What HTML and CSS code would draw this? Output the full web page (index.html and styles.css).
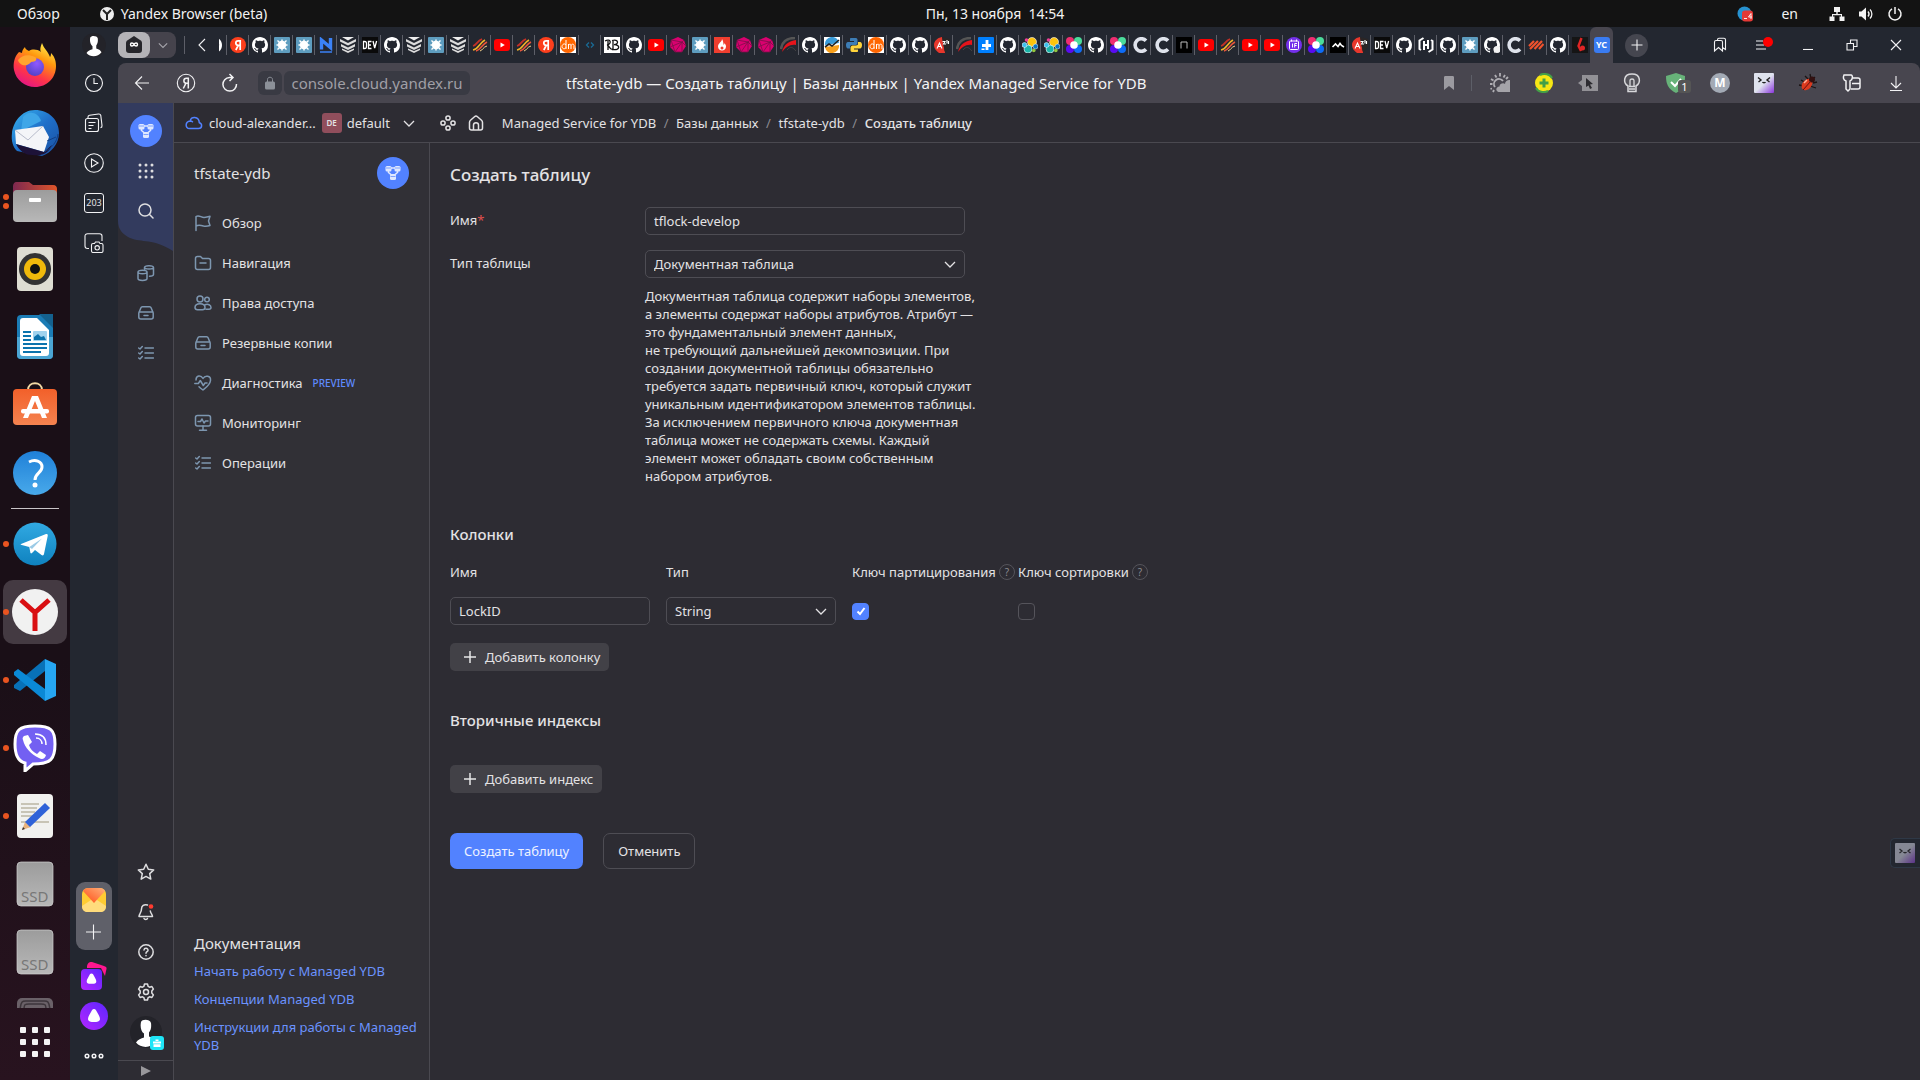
FILE: index.html
```html
<!DOCTYPE html>
<html lang="ru">
<head>
<meta charset="utf-8">
<meta name="viewport" content="width=device-width, initial-scale=1">
<title>tfstate-ydb — Создать таблицу</title>
<link rel="stylesheet" href="styles.css">
</head>
<body>
<svg class="sprite" aria-hidden="true">
  <defs>
    <linearGradient id="g-fox" x1="0.8" y1="0" x2="0.3" y2="1"><stop offset="0" stop-color="#fff44f"/><stop offset="0.35" stop-color="#ff980e"/><stop offset="0.7" stop-color="#ff3647"/><stop offset="1" stop-color="#e31587"/></linearGradient>
    <radialGradient id="g-globe" cx="0.6" cy="0.3" r="0.8"><stop offset="0" stop-color="#9059ff"/><stop offset="1" stop-color="#4a3fc0"/></radialGradient>
    <linearGradient id="g-bird" x1="0" y1="0" x2="1" y2="1"><stop offset="0" stop-color="#38b4f0"/><stop offset="0.5" stop-color="#1f6fc9"/><stop offset="1" stop-color="#1a4fa0"/></linearGradient>
    <linearGradient id="g-grey" x1="0" y1="0" x2="0" y2="1"><stop offset="0" stop-color="#9c9c9c"/><stop offset="1" stop-color="#b8b8b8"/></linearGradient>
    <linearGradient id="g-folder" x1="0" y1="0" x2="1" y2="0"><stop offset="0" stop-color="#7d2850"/><stop offset="1" stop-color="#e0552a"/></linearGradient>
    <linearGradient id="g-orange" x1="0" y1="0" x2="0" y2="1"><stop offset="0" stop-color="#f2602a"/><stop offset="1" stop-color="#f58350"/></linearGradient>
    <linearGradient id="g-help" x1="0" y1="0" x2="0" y2="1"><stop offset="0" stop-color="#1f80d8"/><stop offset="1" stop-color="#48a9ea"/></linearGradient>
    <linearGradient id="g-tg" x1="0" y1="0" x2="0" y2="1"><stop offset="0" stop-color="#31a9e2"/><stop offset="1" stop-color="#0f82bf"/></linearGradient>
    <linearGradient id="g-alice" x1="1" y1="0" x2="0" y2="1"><stop offset="0" stop-color="#5c26ff"/><stop offset="1" stop-color="#b426ff"/></linearGradient>
    <linearGradient id="g-mail" x1="0" y1="1" x2="1" y2="0"><stop offset="0" stop-color="#ff4b14"/><stop offset="1" stop-color="#ffb27a"/></linearGradient>
    <linearGradient id="g-face" x1="0" y1="0" x2="1" y2="1"><stop offset="0.5" stop-color="#dfe3ee"/><stop offset="1" stop-color="#8a35dd"/></linearGradient>
    <linearGradient id="g-facedim" x1="0" y1="0" x2="1" y2="1"><stop offset="0.5" stop-color="#858894"/><stop offset="1" stop-color="#5b3288"/></linearGradient>
  </defs>
  <symbol id="t-ya" viewBox="0 0 16 16"><circle cx="8" cy="8" r="8" fill="#fc3f1d"/><path d="M10.200 3v10M10 3.800H8.200C5 3.800 5 8.300 8.200 8.300H10M8.300 8.300L5.800 13" fill="none" stroke="#fff" stroke-width="1.700"/></symbol>
  <symbol id="t-gh" viewBox="0 0 16 16"><path fill="#fff" d="M8 0C3.58 0 0 3.58 0 8c0 3.54 2.29 6.53 5.47 7.59.4.07.55-.17.55-.38 0-.19-.01-.82-.01-1.49-2.01.37-2.53-.49-2.69-.94-.09-.23-.48-.94-.82-1.13-.28-.15-.68-.52-.01-.53.63-.01 1.08.58 1.23.82.72 1.21 1.87.87 2.33.66.07-.52.28-.87.51-1.07-1.78-.2-3.64-.89-3.64-3.95 0-.87.31-1.59.82-2.15-.08-.2-.36-1.02.08-2.12 0 0 .67-.21 2.2.82.64-.18 1.32-.27 2-.27s1.36.09 2 .27c1.53-1.04 2.2-.82 2.2-.82.44 1.1.16 1.92.08 2.12.51.56.82 1.27.82 2.15 0 3.07-1.87 3.75-3.65 3.95.29.25.54.73.54 1.48 0 1.07-.01 1.93-.01 2.2 0 .21.15.46.55.38A8.01 8.01 0 0016 8c0-4.42-3.58-8-8-8z"/></symbol>
  <symbol id="t-sun" viewBox="0 0 16 16"><rect width="16" height="16" rx="1" fill="#5e9dbf"/><path d="M8 2.500v11M2.500 8h11M3.500 3.500l9 9M12.500 3.500l-9 9" stroke="#fff" stroke-width="1.400"/><circle cx="8" cy="8" r="4.200" fill="#fff"/></symbol>
  <symbol id="t-n" viewBox="0 0 16 16"><path d="M3.500 12.500V3l9 7.500V1" fill="none" stroke="#3b82f6" stroke-width="3.400"/><path d="M2 15h12" stroke="#3b82f6" stroke-width="1.500"/></symbol>
  <symbol id="t-stack" viewBox="0 0 16 16"><path d="M0 2l8 4 8-4v2.500l-8 4-8-4zM1 7l7 3.500L15 7v2.500L8 13 1 9.500zM2 11.500L8 14l6-2.500v1.500l-6 3-6-3z" fill="#dcdcdc"/><path d="M2 0h12L8 3.500z" fill="#eee"/></symbol>
  <symbol id="t-dev" viewBox="0 0 16 16"><rect width="16" height="16" fill="#0a0a0a"/><path d="M1.500 4.500v7h1c2 0 2-1 2-3.500s0-3.500-2-3.500zM9.500 4.500h-3v7h3M6.500 8h2.500M11 4l1.700 7L14.600 4" fill="none" stroke="#fff" stroke-width="1.300"/></symbol>
  <symbol id="t-stripe" viewBox="0 0 16 16"><path d="M1 9c4-1 4-5 9-7" stroke="#c33027" stroke-width="1.800" fill="none"/><path d="M1 13c6-1 6-7 12-10" stroke="#f0b429" stroke-width="1.600" fill="none"/><path d="M4 14c5-1 5-6 11-9" stroke="#e8553c" stroke-width="1.600" fill="none"/><path d="M8 14c3-1 3-4 7-5" stroke="#f6d28b" fill="none"/></symbol>
  <symbol id="t-yt" viewBox="0 0 16 16"><rect y="2" width="16" height="12" rx="3" fill="#f00"/><path d="M6.500 5.500v5L10.800 8z" fill="#fff"/></symbol>
  <symbol id="t-dm" viewBox="0 0 16 16"><rect width="16" height="16" fill="#fff"/><circle cx="8" cy="8" r="8" fill="#f60"/><path d="M6 3v9M6 8C5 6 2 7 2 9.500s3 3 4 1M8.500 12V7M8.500 8.500c1-2 2.500-1.500 2.500 0V12M11 8.500c1-2 3-1.500 3 0V12" stroke="#fff" fill="none"/></symbol>
  <symbol id="t-code" viewBox="0 0 16 16"><path d="M7 5.500L4.500 8 7 10.500M9 5.500l2.500 2.500L9 10.500" stroke="#1a6a94" stroke-width="1.300" fill="none"/></symbol>
  <symbol id="t-rb" viewBox="0 0 16 16"><rect width="16" height="16" fill="#fff"/><path d="M1 4c6-3 7 3 2 4 2 0 3 5 5 4M4 4v9M9 3v9.500M8 3.500c7-2 7 4 2 4.200 7 0 6 6-2 4.800" stroke="#111" stroke-width="1.300" fill="none"/></symbol>
  <symbol id="t-gem" viewBox="0 0 16 16"><path d="M8 0l6 3 2 6-4 6H5L0 10l1-7z" fill="#d9016f"/><path d="M1 3l11 2 4 4M12 5L5 15M1 3l4 12M5 15h7V5M0 10l12-5 2-2" stroke="#7a1048" stroke-width=".8" fill="none"/></symbol>
  <symbol id="t-burn" viewBox="0 0 16 16"><rect width="16" height="16" fill="#f03e2f"/><path d="M8 2c0 3-4 4-4 7.500C4 12 6 13.500 8 13.500s4-1.500 4-4C12 7.500 11 7 10.500 6c0 1-.5 1.500-1 2C9.500 6 9 3.500 8 2z" fill="#fff"/><circle cx="8" cy="11" r="1.500" fill="#f03e2f"/></symbol>
  <symbol id="t-arc" viewBox="0 0 16 16"><path d="M1 12C2 4 8 1 15 1" stroke="#555" stroke-width="2.500" fill="none"/><path d="M2 15C4 7 9 4 16 3v5c-6-1-10 2-14 7z" fill="#e5141b"/><path d="M7 13c3-4 6-3 9 1" stroke="#444" fill="none"/></symbol>
  <symbol id="t-chart" viewBox="0 0 16 16"><rect width="16" height="16" fill="#fff"/><path d="M1 8a7 7 0 0114-2z" fill="#3a9bd8"/><path d="M15 8A7 7 0 011 10z" fill="#f8a01c"/><path d="M1 10l4-3 3 2 7-6" stroke="#222" stroke-width="1.600" fill="none"/></symbol>
  <symbol id="t-py" viewBox="0 0 16 16"><path d="M5 1h5c1 0 1.500 1 1.500 2v3c0 1-1 2-2 2H6C4.500 8 4 9 4 10v1.500H2C.5 11.500 0 9.500 0 8s.5-3 2-3h6V4H4V2.500C4 1.500 4 1 5 1z" fill="#3d7db5"/><path d="M11 15H6c-1 0-1.500-1-1.500-2v-2.500c0-1 1-2 2-2H10c1.500 0 2-1 2-2V5h2c1.500 0 2 1.500 2 3s-.5 3.500-2 3.500H8v1h4V13c0 1.500 0 2-1 2z" fill="#ffd43b"/></symbol>
  <symbol id="t-a" viewBox="0 0 16 16"><path d="M8 0C3 1 0 4 0 8c0 3 2 6 5 8h6z" fill="#e8372c"/><path d="M8 0l8 2v8l-5 6z" fill="#2a2626"/><path d="M7 6l4 10H5z" fill="#e8372c"/><path d="M3 11.500L5.500 6 8 11.500M4 9.500h3.500M8.500 4.500H11L9.500 7H12M13 3v3.500M14.500 4v3" stroke="#fff" stroke-width="1.100" fill="none"/></symbol>
  <symbol id="t-plus" viewBox="0 0 16 16"><rect width="16" height="16" rx="1" fill="#0080ff"/><path d="M9 3v10M4 8.500h9" stroke="#fff" stroke-width="2.800"/><path d="M3.500 11.500h3V13h-3z" fill="#fff"/></symbol>
  <symbol id="t-el" viewBox="0 0 16 16"><circle cx="10" cy="5" r="4.500" fill="#fdc40c" stroke="#fff" stroke-width=".6"/><circle cx="6" cy="12" r="4" fill="#1bb5a9" stroke="#fff" stroke-width=".6"/><circle cx="2.500" cy="8" r="2.500" fill="#3cc1ee" stroke="#fff" stroke-width=".5"/><circle cx="13.500" cy="9.500" r="2.500" fill="#0a76c2" stroke="#fff" stroke-width=".5"/><circle cx="4.500" cy="3" r="1.800" fill="#ee3f97"/><circle cx="11.800" cy="13.500" r="1.800" fill="#93c83e"/></symbol>
  <symbol id="t-four" viewBox="0 0 16 16"><circle cx="4" cy="4" r="4" fill="#ef2d71"/><circle cx="12" cy="4" r="4" fill="#4bdc9b"/><circle cx="4" cy="12" r="4" fill="#5a0cf2"/><circle cx="12" cy="12" r="4" fill="#0e6cf7"/><circle cx="8" cy="8" r="3.800" fill="#fff"/></symbol>
  <symbol id="t-c" viewBox="0 0 16 16"><path d="M14 3.700A6.300 6.300 0 1014 12.300" fill="none" stroke="#dfe3ec" stroke-width="3.600"/></symbol>
  <symbol id="t-arch" viewBox="0 0 16 16"><rect width="16" height="16" fill="#000"/><path d="M5 11.500V5h6v6.500" fill="none" stroke="#bbb"/></symbol>
  <symbol id="t-if" viewBox="0 0 16 16"><circle cx="8" cy="8" r="8" fill="#7430ea"/><rect x="3.500" y="4" width="9" height="8.500" rx="1" fill="none" stroke="#fff"/><path d="M5.500 2.500v2M10.500 2.500v2M6.500 6.500v4M8.700 10.500v-4H11M8.700 8.500h2" stroke="#fff" fill="none"/></symbol>
  <symbol id="t-mt" viewBox="0 0 16 16"><rect width="16" height="16" fill="#000"/><path d="M2.500 10l3-3 2.500 2.500 2-3 1.500 2 2.500 1.500" fill="none" stroke="#fff" stroke-width="1.600"/></symbol>
  <symbol id="t-hc" viewBox="0 0 16 16"><path d="M5.500 1L1.500 3.500v8.500l1.500 1M6 4v9M6 8h4M10 3v9M10.500 15l4-2.500V4L13 3" stroke="#fff" stroke-width="2" fill="none"/></symbol>
  <symbol id="t-ghdot" viewBox="0 0 16 16"><use href="#t-gh"/><circle cx="13" cy="12.500" r="3.500" fill="#f2f2f2"/></symbol>
  <symbol id="t-strp2" viewBox="0 0 16 16"><path d="M1 9l5-5M2 12L10 4M6.500 12L14 4M11 12l4.500-5" stroke="#f0522d" stroke-width="2.200"/></symbol>
  <symbol id="t-six" viewBox="0 0 16 16"><rect width="16" height="16" fill="#151515"/><path d="M9.500 1L6.500 9l2.500 5" stroke="#e02525" stroke-width="2.400" fill="none"/><circle cx="10.500" cy="11" r="2.500" fill="#e02525"/></symbol>

  <symbol id="user" viewBox="0 0 32 32"><circle cx="16" cy="16" r="16" fill="#232329"/><path d="M11 6c1-3 9-3 10 1 .5 4 0 7-2 9.500v4c4 1 6 3 7 5-5 7-15 7-20 1 2-3 5-4 8-5v-4c-3-2-4-7-3-11.500z" fill="#fff"/></symbol>
  <symbol id="ydb" viewBox="0 0 32 32"><circle cx="16" cy="16" r="16" fill="#5282ff"/><g fill="#dfe8ff"><rect x="8.500" y="9" width="6" height="5.500" rx="1.500"/><rect x="17.500" y="9" width="6" height="5.500" rx="1.500"/><rect x="13" y="17" width="6" height="6" rx="1.500"/></g><path d="M14 11h4M11.500 14v1.500l3 2.500M20.500 14v1.500l-3 2.500" stroke="#dfe8ff" stroke-width="1.600" fill="none"/><path d="M9 11h5M18 11h5M13.500 19.500h5" stroke="#5282ff" stroke-width=".7"/></symbol>
  <symbol id="alice" viewBox="0 0 20 20"><path d="M10 3c1.500 0 2 1 3 3 1.300 2.500 3 5 3 7 0 2.500-3 3-6 3s-6-.5-6-3c0-2 1.700-4.500 3-7 1-2 1.500-3 3-3z" fill="#fff"/></symbol>
  <symbol id="chev" viewBox="0 0 12 12"><path d="M1 4L6 9 11 4" fill="none" stroke="currentColor" stroke-width="1.300"/></symbol>
  <symbol id="drawer" viewBox="0 0 16 16"><path d="M.8 8l2-5c.3-.8.8-1.200 1.600-1.200h7.200c.8 0 1.300.4 1.600 1.200l2 5v4c0 1.200-.8 2-2 2H2.800c-1.200 0-2-.8-2-2zM1 7h14M6 10.500h4" class="ln"/></symbol>
  <symbol id="checks" viewBox="0 0 16 16"><path d="M7 3h8.500M7 8h8.500M7 13h8.500M.7 3l1.300 1L4.300 1.500M.7 8L2 9l2.300-2.500M.7 13L2 14l2.300-2.500" class="ln"/></symbol>
  <symbol id="ssd" viewBox="0 0 48 48"><rect x="6" y="2" width="36" height="44" rx="4" fill="url(#g-grey)" stroke="#d0d0d0" stroke-width=".7"/></symbol>
</svg>

<header class="topbar">
  <div class="topbar-left">
    <button class="plain">Обзор</button>
    <button class="plain app-name"><svg width="14" height="14" viewBox="0 0 14 14"><circle cx="7" cy="7" r="7" fill="#eee"/><path d="M3 3l4 4 4-4M7 7v6" stroke="#222" stroke-width="2" fill="none"/></svg>Yandex Browser (beta)</button>
  </div>
  <button class="plain clock">Пн, 13 ноября&nbsp; 14:54</button>
  <div class="topbar-right">
    <svg class="tray-tg" width="16" height="16" viewBox="0 0 16 16"><circle cx="7.500" cy="7.500" r="7" fill="#2792d0"/><rect x="5" y="4.500" width="11" height="11" rx="3" fill="#e53935"/><path d="M7 12.500h3M14 13V7.500L11.500 11H15" stroke="#fff" fill="none" stroke-width=".9"/></svg>
    <span class="lang">en</span>
    <svg width="16" height="16" viewBox="0 0 16 16" fill="#f2f2f2"><path d="M5 1h6v5H8.700v2H13v2.500h2.500V15h-5v-4.500H12V9.200H4v1.300h1.500V15h-5v-4.500H3V8h4.300V6H5z"/></svg>
    <svg width="16" height="16" viewBox="0 0 16 16"><path d="M1 5.500h2.500L8 1.500v13l-4.500-4H1z" fill="#f2f2f2"/><path d="M10 5.500c1.300 1.500 1.300 3.500 0 5M12 3.500c2.500 2.500 2.500 6.500 0 9" fill="none" stroke="#f2f2f2" stroke-width="1.300"/></svg>
    <svg width="16" height="16" viewBox="0 0 16 16"><path d="M5 2.800a6 6 0 106 0M8 1v7" fill="none" stroke="#f2f2f2" stroke-width="1.500"/></svg>
  </div>
</header>

<div class="desktop">
  <nav class="dock" aria-label="Dock">
    <button class="dock-item" aria-label="Firefox"><svg viewBox="0 0 48 48"><path d="M31 2c-2 5-2 7-1 9-4-3-9-3-12-1-3-1-4-3-4-4-2 2-3 4-3 6l-3-1c-5 5-6 12-5 18 2 10 11 17 21 17 12 0 21-9 21-21 0-6-2-10-5-13 0 3-1 4-1 4-2-6-6-8-8-14z" fill="url(#g-fox)"/><circle cx="24" cy="26" r="9" fill="url(#g-globe)"/><path d="M7 19c4-5 10-6 17-3 3 2 1 5-4 5-1 2-4 3-4 3-4 1-8-1-9-5z" fill="#ffa52e"/></svg></button>
    <button class="dock-item" aria-label="Thunderbird"><svg viewBox="0 0 48 48"><path d="M24 1c14 0 24 10 24 23 0 11-8 20-17 23L6 42C2 38 0 32 1 24 2 14 10 1 24 1z" fill="url(#g-bird)"/><path d="M12 8C18 0 28 4 30 12L10 22z" fill="#3ea6e8"/><path d="M4 21l28-4 6 11-5 15-28-8z" fill="#f4f5f8"/><path d="M4 21l13 10 15-14" stroke="#b8bccb" fill="none"/><path d="M5 35l28 8 8-7c-4 10-12 11-20 10-8 0-13-5-16-11z" fill="#1d1238"/><path d="M33 43c8-4 13-10 14-18M36 32l9-4" stroke="#123f85" fill="none"/></svg></button>
    <button class="dock-item" aria-label="Файлы"><i class="dot-a"></i><svg viewBox="0 0 48 48"><path d="M2 10c0-3 1-5 4-5h12l4 3h20c3 0 4 2 4 4v12H2z" fill="url(#g-folder)"/><rect x="2" y="13" width="44" height="32" rx="4" fill="url(#g-grey)"/><rect x="18" y="21" width="12" height="4" rx="1" fill="#fff"/></svg></button>
    <button class="dock-item" aria-label="Rhythmbox"><svg viewBox="0 0 48 48"><rect x="6" y="2" width="36" height="44" rx="4" fill="#deddd2"/><circle cx="24" cy="24" r="16" fill="#333"/><circle cx="24" cy="24" r="11" fill="#f0b90b"/><circle cx="24" cy="24" r="5" fill="#111"/></svg></button>
    <button class="dock-item" aria-label="Writer"><svg viewBox="0 0 48 48"><rect x="6" y="2" width="36" height="44" rx="4" fill="#1b7cb5"/><path d="M6 24h36v18a4 4 0 01-4 4H10a4 4 0 01-4-4z" fill="#4ba5d3"/><path d="M9 8c0-2 1-3 3-3h14l12 12v23c0 2-1 3-3 3H12c-2 0-3-1-3-3z" fill="#fff"/><path d="M28 1h14v14z" fill="#14618e"/><path d="M12 19h8M12 23h8M12 27h8M12 31h24M12 35h24M12 39h18" stroke="#0c73ad" stroke-width="2"/><rect x="22" y="18" width="14" height="10" rx="1" fill="#9fd2ee"/><path d="M23 27v-3l4-3 3 3 3-1 2 4z" fill="#0c73ad"/></svg></button>
    <button class="dock-item" aria-label="Ubuntu Software"><svg viewBox="0 0 48 48"><path d="M17 9c0-9 14-9 14 0" stroke="#f3d9a5" stroke-width="2" fill="none"/><rect x="2" y="8" width="44" height="36" rx="4" fill="url(#g-orange)"/><path d="M12 37l9-22h6l9 22h-5l-7-17-7 17z" fill="#fff"/><rect x="10" y="28" width="28" height="4.500" rx="2" fill="#fff"/></svg></button>
    <button class="dock-item" aria-label="Справка"><svg viewBox="0 0 48 48"><circle cx="24" cy="24" r="22" fill="url(#g-help)"/><path d="M18 13c6-3 13-1 13 5 0 6-7 6-7 13" stroke="#fff" stroke-width="3" fill="none"/><circle cx="24" cy="36" r="2.500" fill="#fff"/></svg></button>
    <hr>
    <button class="dock-item" aria-label="Telegram"><i class="dot-b"></i><svg viewBox="0 0 48 48"><circle cx="24" cy="24" r="21.500" fill="url(#g-tg)"/><path d="M10 24l25-10c1.500-.4 2 .3 1.700 2L33 34c-.3 1.500-1.300 1.700-2.500 1l-6.500-5-3 3c-1 1-1.600.3-1.700-.7l-1-5.300-7.500-2c-1.300-.3-1.300-1-.8-1z" fill="#fff"/><path d="M18.300 27L31 18.500 21 29z" fill="#9ccbe6"/></svg></button>
    <button class="dock-item active" aria-label="Yandex Browser"><i class="dot-b"></i><svg viewBox="0 0 48 48"><circle cx="24" cy="24" r="23" fill="#f1f1f1"/><path d="M10 12l14 12.500L38 12M24 24v19" stroke="#d90f12" stroke-width="5" fill="none"/></svg></button>
    <button class="dock-item" aria-label="Visual Studio Code"><i class="dot-b"></i><svg viewBox="0 0 48 48"><path d="M34 3v12L9 35l-6-3v-3z" fill="#0871b8"/><path d="M34 45V33L7 13l-4 3v3z" fill="#0b89d6"/><path d="M34 3l11 5v32l-11 5z" fill="#26a6f2"/></svg></button>
    <button class="dock-item" aria-label="Viber"><i class="dot-b"></i><svg viewBox="0 0 48 48"><path d="M24 2C8 2 4 6 4 20c0 10 2 17 10 19v8l8-7c18 0 22-5 22-20C44 6 40 2 24 2z" fill="#7360f2" stroke="#fff" stroke-width="3"/><path d="M13 12l4-1 4 7-3 3c1 4 4 7 8 9l3-3 6 4c-1 4-4 5-7 3-8-4-14-10-16-18-1-2 0-3 1-4z" fill="#fff"/><path d="M24 10c8 0 11 4 11 11M25 14c4 0 6 3 6 6" stroke="#fff" stroke-width="1.500" fill="none"/></svg></button>
    <button class="dock-item" aria-label="Редактор"><i class="dot-b"></i><svg viewBox="0 0 48 48"><rect x="6" y="2" width="36" height="44" rx="4" fill="#f1f1ef"/><path d="M10 12h18M10 16h16M10 20h14M10 24h12M10 30h28" stroke="#c8c4b6" stroke-width="2"/><path d="M11 38l3-8 6 5z" fill="#e8b27c"/><path d="M14 30L34 11l5 5-20 19z" fill="#2f62d8"/><path d="M11 38l1-3 2 2z" fill="#333"/></svg></button>
    <button class="dock-item ssd"><svg viewBox="0 0 48 48"><use href="#ssd"/></svg><span>SSD</span></button>
    <button class="dock-item ssd"><svg viewBox="0 0 48 48"><use href="#ssd"/></svg><span>SSD</span></button>
    <div class="dock-cut"><svg width="36" height="30" viewBox="0 0 36 30"><rect width="36" height="30" rx="5" fill="#6a6168"/><path d="M3 12c1-10 3-9 7-9h16c4 0 6-1 7 9M7 12c0-6 1-6 5-6h12c4 0 5 0 5 6" fill="none" stroke="#3d353b" stroke-width="1.500"/></svg></div>
    <button class="dock-item" aria-label="Приложения"><svg class="apps" viewBox="0 0 30 30" fill="#f4f4f4"><rect width="6" height="6" rx="1"/><rect x="12" width="6" height="6" rx="1"/><rect x="24" width="6" height="6" rx="1"/><rect y="12" width="6" height="6" rx="1"/><rect x="12" y="12" width="6" height="6" rx="1"/><rect x="24" y="12" width="6" height="6" rx="1"/><rect y="24" width="6" height="6" rx="1"/><rect x="12" y="24" width="6" height="6" rx="1"/><rect x="24" y="24" width="6" height="6" rx="1"/></svg></button>
  </nav>

  <aside class="side">
    <button class="side-item first" aria-label="Профиль"><svg width="24" height="24"><use href="#user"/></svg></button>
    <button class="side-item" aria-label="История"><svg width="20" height="20" viewBox="0 0 20 20" class="thin"><circle cx="10" cy="10" r="8.500"/><path d="M10 5v5.500h4"/></svg></button>
    <button class="side-item" aria-label="Коллекции"><svg width="20" height="20" viewBox="0 0 20 20" class="thin"><rect x="1.500" y="5.500" width="13" height="13" rx="2"/><path d="M4 5.500V4c0-1 .5-1.500 1.500-1.700l9-1.300c1.500-.2 2 .3 2.300 1.500l1.200 10c.2 1.300-.3 2-1.500 2.300M4.500 9.500h7M4.500 12.500h5M4.500 15.500h3"/></svg></button>
    <button class="side-item" aria-label="Видео"><svg width="20" height="20" viewBox="0 0 20 20" class="thin"><circle cx="10" cy="10" r="9.300"/><path d="M7.500 6l6.500 4-6.500 4z"/></svg></button>
    <button class="side-item"><span class="counter">203</span></button>
    <button class="side-item" aria-label="Скриншот"><svg width="20" height="20" viewBox="0 0 20 20" class="thin"><path d="M5 15.500H3.500c-1.500 0-2.500-1-2.500-2.500V3C1 1.500 2 .7 3.500.7h12C17 .7 18 1.500 18 3v5M7.500 12c0-1 .5-1.500 1.500-1.500h1.500l1-1.500h3.500l1 1.500h1.500c1 0 1.500.5 1.500 1.500v6c0 1-.5 1.500-1.500 1.500H9c-1 0-1.500-.5-1.500-1.500z"/><circle cx="13.200" cy="14.800" r="2.200"/></svg></button>
    <div class="side-group">
      <button class="plain" aria-label="Почта"><svg width="24" height="24" viewBox="0 0 24 24"><rect width="24" height="24" rx="6" fill="#ffcc33"/><path d="M0 18l12-8 12 8c0 4-2 6-6 6H6c-4 0-6-2-6-6z" fill="#ffdc7c"/><path d="M1 3c1-2 3-3 5-3h12c2 0 4 1 5 3L12 15z" fill="url(#g-mail)"/></svg></button>
      <button class="plain" aria-label="Добавить"><svg width="16" height="16" viewBox="0 0 16 16" class="thin"><path d="M7.500 .5v15M0 8h15"/></svg></button>
    </div>
    <button class="side-item" aria-label="Алиса"><svg width="26" height="28" viewBox="0 0 26 28"><path d="M6 4C7 0 9 0 11 0l12 4c3 1 3 2 2 5l-1 5-4-8H6z" fill="#ff1790"/><rect y="7" width="21" height="21" rx="4" fill="url(#g-alice)"/><use href="#alice" x="2.500" y="9" width="16" height="16"/></svg></button>
    <button class="side-item" aria-label="Алиса"><svg width="28" height="28" viewBox="0 0 28 28"><circle cx="14" cy="14" r="14" fill="url(#g-alice)"/><use href="#alice" x="4" y="4" width="20" height="20"/></svg></button>
    <button class="side-item" aria-label="Ещё"><svg width="20" height="6" viewBox="0 0 20 6" class="thin bolder"><circle cx="3" cy="3" r="1.800"/><circle cx="10" cy="3" r="1.800"/><circle cx="17" cy="3" r="1.800"/></svg></button>
  </aside>

  <div class="browser">
    <div class="tabs">
      <div class="switcher"><button class="plain mode" aria-label="Режим"><svg width="18" height="18" viewBox="0 0 18 18"><path d="M3 4l6-4 6 4c2 1 2 2 2 4v6c0 2-1 3-3 3H4c-2 0-3-1-3-3V8c0-2 0-3 2-4z" fill="#26262b"/><path d="M9 8.500c-1-2-3.500-2-3.500 0s2.500 2 3.500 0 3.500-2 3.500 0-2.500 2-3.500 0z" fill="none" stroke="#fff" stroke-width="1.400"/></svg></button><button class="plain mode-more" aria-label="Ещё"><svg width="10" height="10"><use href="#chev"/></svg></button></div>
      <span class="bar"></span>
      <button class="plain prev" aria-label="Назад"><svg width="10" height="14" viewBox="0 0 10 14" class="thin"><path d="M8 1L2 7l6 6"/></svg></button>
      <span class="cut"><svg width="16" height="16"><use href="#t-gh"/></svg></span>
      <button class="tab"><svg><use href="#t-ya"/></svg></button><button class="tab"><svg><use href="#t-gh"/></svg></button><button class="tab"><svg><use href="#t-sun"/></svg></button><button class="tab"><svg><use href="#t-sun"/></svg></button><button class="tab"><svg><use href="#t-n"/></svg></button><button class="tab"><svg><use href="#t-stack"/></svg></button><button class="tab"><svg><use href="#t-dev"/></svg></button><button class="tab"><svg><use href="#t-gh"/></svg></button><button class="tab"><svg><use href="#t-stack"/></svg></button><button class="tab"><svg><use href="#t-sun"/></svg></button><button class="tab"><svg><use href="#t-stack"/></svg></button><button class="tab"><svg><use href="#t-stripe"/></svg></button><button class="tab"><svg><use href="#t-yt"/></svg></button><button class="tab"><svg><use href="#t-stripe"/></svg></button><button class="tab"><svg><use href="#t-ya"/></svg></button><button class="tab"><svg><use href="#t-dm"/></svg></button><button class="tab"><svg><use href="#t-code"/></svg></button><button class="tab"><svg><use href="#t-rb"/></svg></button><button class="tab"><svg><use href="#t-gh"/></svg></button><button class="tab"><svg><use href="#t-yt"/></svg></button><button class="tab"><svg><use href="#t-gem"/></svg></button><button class="tab"><svg><use href="#t-sun"/></svg></button>
      <button class="tab"><svg><use href="#t-burn"/></svg></button><button class="tab"><svg><use href="#t-gem"/></svg></button><button class="tab"><svg><use href="#t-gem"/></svg></button><button class="tab"><svg><use href="#t-arc"/></svg></button><button class="tab"><svg><use href="#t-gh"/></svg></button><button class="tab"><svg><use href="#t-chart"/></svg></button><button class="tab"><svg><use href="#t-py"/></svg></button><button class="tab"><svg><use href="#t-dm"/></svg></button><button class="tab"><svg><use href="#t-gh"/></svg></button><button class="tab"><svg><use href="#t-gh"/></svg></button><button class="tab"><svg><use href="#t-a"/></svg></button><button class="tab"><svg><use href="#t-arc"/></svg></button><button class="tab"><svg><use href="#t-plus"/></svg></button><button class="tab"><svg><use href="#t-gh"/></svg></button><button class="tab"><svg><use href="#t-el"/></svg></button><button class="tab"><svg><use href="#t-el"/></svg></button><button class="tab"><svg><use href="#t-four"/></svg></button><button class="tab"><svg><use href="#t-gh"/></svg></button><button class="tab"><svg><use href="#t-four"/></svg></button><button class="tab"><svg><use href="#t-c"/></svg></button><button class="tab"><svg><use href="#t-c"/></svg></button>
      <button class="tab"><svg><use href="#t-arch"/></svg></button><button class="tab"><svg><use href="#t-yt"/></svg></button><button class="tab"><svg><use href="#t-stripe"/></svg></button><button class="tab"><svg><use href="#t-yt"/></svg></button><button class="tab"><svg><use href="#t-yt"/></svg></button><button class="tab"><svg><use href="#t-if"/></svg></button><button class="tab"><svg><use href="#t-four"/></svg></button><button class="tab"><svg><use href="#t-mt"/></svg></button><button class="tab"><svg><use href="#t-a"/></svg></button><button class="tab"><svg><use href="#t-dev"/></svg></button><button class="tab"><svg><use href="#t-gh"/></svg></button><button class="tab"><svg><use href="#t-hc"/></svg></button><button class="tab"><svg><use href="#t-gh"/></svg></button><button class="tab"><svg><use href="#t-sun"/></svg></button><button class="tab"><svg><use href="#t-ghdot"/></svg></button><button class="tab"><svg><use href="#t-c"/></svg></button><button class="tab"><svg><use href="#t-strp2"/></svg></button><button class="tab"><svg><use href="#t-gh"/></svg></button><button class="tab"><svg><use href="#t-six"/></svg></button>
      <button class="tab-current"><span>YC</span></button>
      <button class="plain new-tab" aria-label="Новая вкладка"><svg width="12" height="12" viewBox="0 0 12 12" class="thin"><path d="M6 .5v11M.5 6h11"/></svg></button>
      <div class="window-buttons">
        <button class="slot" aria-label="Закладки"><svg width="14" height="16" viewBox="0 0 14 16" class="thin"><path d="M1.500 5c0-1 .5-1.500 1.500-1.500h5c1 0 1.500.5 1.500 1.500v9l-4-3.500-4 3.500zM4.500 3.500V3c0-1 .5-1.700 1.500-1.700h5c1 0 1.500.7 1.500 1.700v9.500l-3-2"/></svg></button>
        <button class="slot" aria-label="Меню"><svg width="22" height="18" viewBox="0 0 22 18" class="thin"><path d="M3 5h7M3 9h8M3 13h10"/><circle cx="15" cy="6" r="5" class="red"/></svg></button>
        <button class="slot" aria-label="Свернуть"><svg width="10" height="10" viewBox="0 0 10 10" class="thin"><path d="M0 9.500h10"/></svg></button>
        <button class="slot" aria-label="Развернуть"><svg width="12" height="12" viewBox="0 0 12 12" class="thin"><path d="M1 4.500h6.500V11H1zM4.500 4V1H11v6.500H8"/></svg></button>
        <button class="slot" aria-label="Закрыть"><svg width="12" height="12" viewBox="0 0 12 12" class="thin"><path d="M1 1l10 10M11 1L1 11"/></svg></button>
      </div>
    </div>

    <div class="toolbar">
      <button class="slot" aria-label="Назад"><svg width="16" height="16" viewBox="0 0 16 16" class="thin"><path d="M15 8H1.500M8 1.500L1.500 8 8 14.500"/></svg></button>
      <button class="slot" aria-label="Яндекс"><svg width="20" height="20" viewBox="0 0 20 20" class="thin"><circle cx="10" cy="10" r="8.700"/><path d="M12.300 4.500v11M12 5.200h-1.500c-3.500 0-3.500 5 0 5H12M10 10.200l-2.700 5.300" class="bolder"/></svg></button>
      <button class="slot" aria-label="Обновить"><svg width="18" height="20" viewBox="0 0 18 20" class="thin bolder"><path d="M11 4.500H8.500a6.800 6.800 0 107 6.500M8.500 1l3.500 3.500L8.500 8"/></svg></button>
      <div class="address">
        <button class="plain lock" aria-label="Безопасность"><svg width="12" height="14" viewBox="0 0 12 14"><rect x="1" y="5.500" width="10" height="8" rx="1.500" fill="#8b9098"/><path d="M3.500 6V3.500c0-3 5-3 5 0V6" stroke="#8b9098" fill="none"/></svg></button>
        <button class="plain url">console.cloud.yandex.ru</button>
      </div>
      <span class="page-title">tfstate-ydb — Создать таблицу | Базы данных | Yandex Managed Service for YDB</span>
      <button class="slot" aria-label="В закладки"><svg width="10" height="14" viewBox="0 0 10 14"><path d="M0 1.500C0 .5.500 0 1.500 0h7c1 0 1.500.5 1.500 1.500V14l-5-4-5 4z" fill="#9b9aa0"/></svg></button>
      <span class="bar tall"></span>
      <div class="extensions">
        <button class="slot" aria-label="Погода"><svg width="20" height="20" viewBox="0 0 20 20"><path d="M20 19H8.500c-3-1-3-5 1-5.500 0-3 4-4 5.500-2.500C15 8 18 6.500 20 7z" fill="#a5a4a9"/><path d="M5 14a5 5 0 018-6M2 15.500l-1.500.5M2.500 11H0M3.500 7.500L1 6M6.500 4.500L5 2M10 3.500V0M13.500 4.500L15 2M16 6l2-2M4 17l-1 2" stroke="#b0afb4" stroke-width="1.800" fill="none"/></svg></button>
        <button class="slot" aria-label="Плюс"><svg width="20" height="20" viewBox="0 0 20 20"><circle cx="10" cy="10" r="9" fill="#f7e715"/><path d="M6 2c4-2 10-1 12 3M14 18c-4 2-10 1-12-3" stroke="#43a047" stroke-width="2" fill="none"/><path d="M10 5.500v9M5.500 10h9" stroke="#43a047" stroke-width="3"/></svg></button>
        <button class="slot" aria-label="Выбор"><svg width="20" height="18" viewBox="0 0 20 18"><path d="M4 1h16v16H4v-5L0 9l4-3z" fill="#929196"/><path d="M8 4l7 6-3 .5 2 3.500-2 1-1.500-3.500L8 13z" fill="#2d2c31"/></svg></button>
        <button class="slot" aria-label="Лампа"><svg width="18" height="20" viewBox="0 0 18 20"><path d="M9 1c9 0 9 9 4 12v5.500H5V13C0 10 0 1 9 1z" fill="#55545b" stroke="#d8d8db" stroke-width="1.500"/><path d="M7 13V7.500c0-2 4-2 4 0V13M6 13.500h6M6 16h6" stroke="#d8d8db" stroke-width="1.300" fill="none"/></svg></button>
        <button class="slot shield"><svg width="20" height="20" viewBox="0 0 20 20"><path d="M10 0l9 3c0 8-1 13-9 17C2 16 0 11 0 3z" fill="#67b279"/><path d="M5 9l4 4 6-7" stroke="#fff" stroke-width="2" fill="none"/></svg><b>1</b></button>
        <button class="slot"><span class="m-badge">M</span></button>
        <button class="slot" aria-label="Лицо"><svg width="20" height="20" viewBox="0 0 20 20"><rect width="20" height="20" rx="1" fill="url(#g-face)"/><path d="M4 4.500L7 7 4.500 9M16 4.500L13 7l2.500 2M8.500 9c.5 1 2.500 1 3 0" stroke="#222" stroke-width="1.400" fill="none"/></svg></button>
        <button class="slot" aria-label="Жук"><svg width="20" height="20" viewBox="0 0 20 20"><path d="M3 7l5 3M1 12l5 1M7 3l5 5M17 4l-3 3M19 9l-4 1M18 15l-6-2M12 1l1 5" stroke="#1c1414" stroke-width="1.300"/><ellipse cx="9" cy="11.500" rx="4.500" ry="6.500" transform="rotate(40 9 11.500)" fill="#dd3a1e"/><circle cx="14" cy="6.500" r="3" fill="#311"/><path d="M5 17l8-9" stroke="#611" stroke-width="1"/><path d="M6 10l3-3" stroke="#ffb199" stroke-width="1.500"/></svg></button>
        <button class="slot" aria-label="Пароли"><svg width="20" height="20" viewBox="0 0 20 20" class="thin bolder"><path d="M2 2h7c2 0 2 5-1 6v8l-2 2-2-2V8C1 7 1 4 2 2zM10 5h6c1.500 0 2 1 2 2v7c0 1-.5 2-2 2H9M10 10.500h8"/></svg></button>
        <button class="slot" aria-label="Загрузки"><svg width="14" height="18" viewBox="0 0 14 18" class="thin"><path d="M7 2v12M2 9l5 5 5-5M1 16.500h12"/></svg></button>
      </div>
    </div>

    <div class="console">
      <aside class="rail">
        <svg class="rail-wave" width="55" height="148" viewBox="0 0 55 148"><path d="M0 0h55v148C35 135 24 140 12 135 4 131 0 126 0 118z" fill="#333b5e"/></svg>
        <button class="rail-item" aria-label="YDB"><svg width="32" height="32"><use href="#ydb"/></svg></button>
        <button class="rail-item" aria-label="Сервисы"><svg width="16" height="16" viewBox="0 0 16 16" fill="#dedee0"><circle cx="2" cy="2" r="1.500"/><circle cx="8" cy="2" r="1.500"/><circle cx="14" cy="2" r="1.500"/><circle cx="2" cy="8" r="1.500"/><circle cx="8" cy="8" r="1.500"/><circle cx="14" cy="8" r="1.500"/><circle cx="2" cy="14" r="1.500"/><circle cx="8" cy="14" r="1.500"/><circle cx="14" cy="14" r="1.500"/></svg></button>
        <button class="rail-item" aria-label="Поиск"><svg width="16" height="16" viewBox="0 0 16 16"><path d="M11.800 11.800L15 15M7 13A6 6 0 107 1a6 6 0 000 12z" class="ln"/></svg></button>
        <div class="rail-nav">
          <button class="rail-item" aria-label="Базы данных"><svg width="18" height="18" viewBox="0 0 18 18"><path d="M7.500 5V3.500c0-2.500 9-2.500 9 0v7c0 1-1.500 1.700-4 1.800M1 8c0-2.500 9-2.500 9 0v6.500c0 2.500-9 2.500-9 0zM1 8c0 2.300 9 2.300 9 0M7.500 3.500c0 2 9 2 9 0" class="ln"/></svg></button>
          <button class="rail-item" aria-label="Резервные копии"><svg width="16" height="16"><use href="#drawer"/></svg></button>
          <button class="rail-item" aria-label="Операции"><svg width="16" height="16"><use href="#checks"/></svg></button>
        </div>
        <div class="rail-bottom">
          <button class="rail-item" aria-label="Избранное"><svg width="18" height="18" viewBox="0 0 18 18"><path d="M9 1.300l2.300 5 5.400.6-4 3.700 1.100 5.500L9 13.400l-4.800 2.700 1.100-5.500-4-3.700 5.400-.6z" class="ln"/></svg></button>
          <button class="rail-item" aria-label="Уведомления"><svg width="16" height="18" viewBox="0 0 16 18"><path d="M9.500 2C6 .8 3.500 3 3.500 6c0 4-2.500 5-2.500 7.500h13.500c0-2-1.800-3-2.200-5.500M6 15.500c.5 1.300 3 1.300 3.500 0" class="ln"/><circle cx="13" cy="3.500" r="2.300" fill="#ff3b30"/></svg></button>
          <button class="rail-item" aria-label="Помощь"><svg width="16" height="16" viewBox="0 0 16 16"><circle cx="8" cy="8" r="7.200" class="ln"/><path d="M6 6c.3-2.500 4.300-2 4 .3-.2 1.400-2 1.400-2 2.900M8 11.500v.3" class="ln"/></svg></button>
          <button class="rail-item" aria-label="Настройки"><svg width="18" height="18" viewBox="0 0 18 18"><path d="M7.500 1h3l.6 2.300 1.500.9 2.300-.7 1.500 2.600L14.800 8v2l1.600 1.900-1.500 2.600-2.300-.7-1.500.9-.6 2.300h-3l-.6-2.300-1.500-.9-2.300.7-1.500-2.600L3.200 10V8L1.600 6.100l1.500-2.600 2.300.7 1.500-.9z" class="ln"/><circle cx="9" cy="9" r="2.500" class="ln"/></svg></button>
          <button class="rail-item me" aria-label="Аккаунт"><svg width="32" height="32"><use href="#user"/></svg><svg class="org" width="14" height="14" viewBox="0 0 14 14"><rect width="14" height="14" rx="3" fill="#1fe5f7"/><path d="M3 5.500h8v2H3zM3.500 8.200h7V11h-7zM5.500 5V3.500h3V5" fill="#fff"/></svg></button>
        </div>
        <button class="plain expand" aria-label="Развернуть"><svg width="10" height="10" viewBox="0 0 10 10"><path d="M0 0l10 5-10 5z" fill="#98979b"/></svg></button>
      </aside>

      <div class="workspace">
        <nav class="crumbs">
          <a href="#" class="cloud"><svg width="18" height="14" viewBox="0 0 18 14"><path d="M4.500 12.500h9c4 0 4-5 .8-5.800C14 0 5.500 0 5.300 5c-5.500.5-5.300 7.500-.8 7.500zM5.300 5c1 0 1.700.3 2.200.8" class="ln"/></svg><span>cloud-alexander...</span></a>
          <a href="#" class="folder"><span class="de">DE</span><span>default</span></a>
          <button class="plain more" aria-label="Выбрать каталог"><svg width="12" height="12"><use href="#chev"/></svg></button>
          <a href="#" class="c-icon" aria-label="Сервисы"><svg width="16" height="16" viewBox="0 0 16 16"><circle cx="8" cy="3" r="2.100" class="ln"/><circle cx="3" cy="8" r="2.100" class="ln"/><circle cx="13" cy="8" r="2.100" class="ln"/><circle cx="8" cy="13" r="2.100" class="ln"/></svg></a>
          <a href="#" class="c-icon home" aria-label="Главная"><svg width="16" height="16" viewBox="0 0 16 16"><path d="M1.500 7.500c0-1 .2-1.500 1-2.200L6.500 1.700c1-.9 2-.9 3 0l4 3.600c.8.700 1 1.200 1 2.200V13c0 1.200-.8 2-2 2h-9c-1.200 0-2-.8-2-2zM5.500 14.500V10c0-3 5-3 5 0v4.500" class="ln"/></svg></a>
          <a href="#">Managed Service for YDB</a><i>/</i><a href="#">Базы данных</a><i>/</i><a href="#">tfstate-ydb</a><i>/</i><a href="#" class="here">Создать таблицу</a>
        </nav>
        <div class="split">
          <aside class="panel">
            <div class="panel-head"><h2>tfstate-ydb</h2><svg width="32" height="32"><use href="#ydb"/></svg></div>
            <nav class="menu">
              <a href="#"><svg viewBox="0 0 18 18"><path d="M2 16.500v-14c3-2 5 1 8 1 2 0 4-.8 6-1.200L14.500 7 16 11.500c-3 1-4.500 1-6.500.5-2.500-.8-5-1.500-7.500 0" class="ln"/></svg>Обзор</a>
              <a href="#"><svg viewBox="0 0 18 18"><path d="M1.500 4.500c0-1.200.8-2 2-2h3l2 2h6c1.200 0 2 .8 2 2v7c0 1.200-.8 2-2 2h-11c-1.200 0-2-.8-2-2zM6 9h6" class="ln"/></svg>Навигация</a>
              <a href="#"><svg viewBox="0 0 18 18"><circle cx="6" cy="5" r="3" class="ln"/><circle cx="13" cy="5.500" r="2.300" class="ln"/><path d="M1 13.500c0-5 10-5 10 0 0 2-1 2.200-2.500 2.200h-5C2 15.700 1 15.500 1 13.500zM11 10.800c3-1.200 6 .2 6 2.700 0 1.500-.7 1.700-2 1.700h-3" class="ln"/></svg>Права доступа</a>
              <a href="#"><svg viewBox="-1 -1 18 18"><use href="#drawer" width="16" height="16"/></svg>Резервные копии</a>
              <a href="#"><svg viewBox="0 0 18 18"><path d="M2 6c0-5 5-5 7-1.500C11 1 17 1.500 16.500 6.500 16 11 12 13.500 9 16c-2-1.500-3-2.300-4-3.300M.8 9.500h3.500l2-3 3 5 1.700-2.500h2" class="ln"/></svg>Диагностика<em>PREVIEW</em></a>
              <a href="#"><svg viewBox="0 0 18 18"><rect x="1.500" y="1.500" width="15" height="10.500" rx="2" class="ln"/><path d="M4 7.500h2.500l1.500-2.500 2 4 1.500-2H14M9 12v4M5.500 16.300h7" class="ln"/></svg>Мониторинг</a>
              <a href="#"><svg viewBox="-1 -1 18 18"><use href="#checks" width="16" height="16"/></svg>Операции</a>
            </nav>
            <div class="docs">
              <h2>Документация</h2>
              <a href="#">Начать работу с Managed YDB</a>
              <a href="#">Концепции Managed YDB</a>
              <a href="#">Инструкции для работы с Managed<br>YDB</a>
            </div>
          </aside>

          <main class="main">
            <h1>Создать таблицу</h1>
            <form>
              <div class="row"><label for="name">Имя<span class="req">*</span></label><input id="name" class="field" type="text" value="tflock-develop"></div>
              <div class="row"><label for="kind">Тип таблицы</label>
                <div class="stack"><div class="select"><select id="kind" class="field"><option>Документная таблица</option></select><svg width="12" height="12"><use href="#chev"/></svg></div>
                <p>Документная таблица содержит наборы элементов,<br>а элементы содержат наборы атрибутов. Атрибут —<br>это фундаментальный элемент данных,<br>не требующий дальнейшей декомпозиции. При<br>создании документной таблицы обязательно<br>требуется задать первичный ключ, который служит<br>уникальным идентификатором элементов таблицы.<br>За исключением первичного ключа документная<br>таблица может не содержать схемы. Каждый<br>элемент может обладать своим собственным<br>набором атрибутов.</p></div></div>

              <h3>Колонки</h3>
              <table>
                <thead><tr><th class="w-name">Имя</th><th class="w-type">Тип</th><th class="w-key">Ключ партицирования<button type="button" class="hint">?</button></th><th>Ключ сортировки<button type="button" class="hint">?</button></th></tr></thead>
                <tbody><tr>
                  <td><input class="field" type="text" aria-label="Имя" value="LockID"></td>
                  <td><div class="select"><select class="field" aria-label="Тип"><option>String</option></select><svg width="12" height="12"><use href="#chev"/></svg></div></td>
                  <td><span class="tick"><input type="checkbox" aria-label="Ключ партицирования" checked><svg width="10" height="10" viewBox="0 0 10 10"><path d="M1.500 5.500L4 8l4.500-6" fill="none" stroke="#fff" stroke-width="2"/></svg></span></td>
                  <td><span class="tick"><input type="checkbox" aria-label="Ключ сортировки"></span></td>
                </tr></tbody>
              </table>
              <button type="button" class="add"><svg width="12" height="12" viewBox="0 0 12 12"><path d="M6 0v12M0 6h12" stroke="#e6e6e8" stroke-width="1.500"/></svg>Добавить колонку</button>

              <h3>Вторичные индексы</h3>
              <button type="button" class="add index">
                <svg width="12" height="12" viewBox="0 0 12 12"><path d="M6 0v12M0 6h12" stroke="#e6e6e8" stroke-width="1.500"/></svg>Добавить индекс</button>

              <div class="actions"><button type="button" class="primary">Создать таблицу</button><button type="button" class="secondary">Отменить</button></div>
            </form>
          </main>
        </div>
      </div>
      <button class="floater" aria-label="Помощник"><svg width="20" height="20" viewBox="0 0 20 20"><rect width="20" height="20" rx="1" fill="url(#g-facedim)"/><path d="M4.500 6L7 8 4.500 10M15.500 6L13 8l2.500 2M8.500 9c.5 1 2.500 1 3 0" stroke="#26262b" stroke-width="1.300" fill="none"/></svg></button>
    </div>
  </div>
</div>
</body>
</html>
```
FILE: styles.css
```css
* { box-sizing: border-box; }

html, body { height: 100%; }

body {
  margin: 0;
  display: flex;
  flex-direction: column;
  min-height: 100vh;
  overflow: hidden;
  background: #2d2c33;
  color: #e3e2e4;
  font: 13px/18px "Noto Sans", "Open Sans", sans-serif;
}

button, input, select { font: inherit; color: inherit; }
button { cursor: pointer; padding: 0; border: 0; background: none; }
a { color: inherit; text-decoration: none; }
svg { display: block; flex: none; }
h1, h2, h3, p { margin: 0; }

.sprite { position: absolute; width: 0; height: 0; }
.ln { fill: none; stroke: currentColor; stroke-width: 1.5; stroke-linecap: round; stroke-linejoin: round; }
.thin { fill: none; stroke: #f2f2f4; stroke-width: 1.1; }
.bolder { stroke-width: 1.5; }
.thin .red { fill: #f00; stroke: none; }
.plain { display: flex; align-items: center; justify-content: center; }
.slot { width: 44px; flex: none; display: flex; align-items: center; justify-content: center; }

/* system bar */
.topbar {
  flex: none;
  height: 27px;
  display: grid;
  grid-template-columns: 1fr auto 1fr;
  align-items: center;
  padding: 0 17px;
  background: #131313;
  color: #f2f2f2;
  font-size: 14px;
}
.topbar-left { display: flex; gap: 40px; }
.app-name { gap: 7px; }
.clock { margin-left: 70px; }
.topbar-right { display: flex; justify-content: flex-end; align-items: center; gap: 13px; }
.tray-tg { margin-right: 15px; }
.lang { margin-right: 18px; }

.desktop { flex: 1; min-height: 0; display: flex; }

/* dock */
.dock {
  width: 70px;
  flex: none;
  display: flex;
  flex-direction: column;
  padding: 4px 0;
  background: linear-gradient(#1a0f17 60%, #28131f);
}
.dock-item {
  position: relative;
  height: 68px;
  flex: none;
  display: grid;
  place-items: center;
}
.dock-item svg { width: 48px; height: 48px; position: relative; }
.dock-item .apps { width: 30px; height: 30px; }
.dock-item.active::before {
  content: "";
  position: absolute;
  inset: 2px 3px;
  border-radius: 10px;
  background: #443a42;
}
.dot-a, .dot-b {
  position: absolute;
  left: 3px;
  top: 31px;
  width: 6px;
  height: 6px;
  border-radius: 50%;
  background: #e95420;
}
.dot-a { top: 27px; box-shadow: 0 9px 0 #e95420; }
.dock-item.ssd span {
  position: absolute;
  left: 21px;
  bottom: 14px;
  font-size: 15px;
  line-height: 16px;
  color: #777;
}
.dock hr { width: 48px; height: 1px; margin: 1px auto; border: 0; background: #c9c5c8; flex: none; }
.dock-cut { flex: 1; min-height: 0; overflow: hidden; padding: 12px 17px 0; }

/* browser side strip */
.side {
  width: 48px;
  flex: none;
  display: flex;
  flex-direction: column;
  align-items: center;
  padding-bottom: 4px;
  background: #232730;
}
.side-item { width: 48px; height: 40px; flex: none; display: grid; place-items: center; }
.side-item.first { height: 36px; }
.counter {
  width: 20px;
  height: 20px;
  border: 1px solid #f2f2f4;
  border-radius: 3px;
  font-size: 9px;
  line-height: 18px;
}
.side-group {
  width: 36px;
  margin-top: auto;
  margin-bottom: 6px;
  display: flex;
  flex-direction: column;
  gap: 12px;
  padding: 6px 6px 10px;
  border-radius: 9px;
  background: #5f6069;
}

/* browser chrome */
.browser { flex: 1; min-width: 0; display: flex; flex-direction: column; background: #232730; }
.tabs { height: 36px; flex: none; display: flex; align-items: center; }
.switcher { display: flex; height: 26px; width: 58px; border-radius: 8px; background: #45434c; color: #a6a5ab; }
.mode { width: 32px; border-radius: 8px; background: #b4b3b7; }
.mode-more { flex: 1; }
.bar { width: 1px; height: 18px; background: #5d5f68; margin-left: 8px; }
.bar.tall { height: 16px; margin: 0 6px 0 0; }
.prev { width: 34px; height: 28px; }
.cut { width: 7px; height: 16px; overflow: hidden; display: flex; justify-content: flex-end; padding-right: 4px; }
.tab { width: 22px; height: 20px; flex: 0 1 22px; min-width: 0; border-left: 1px solid #5d5f68; display: grid; place-items: center; }
.tab svg { width: 16px; height: 16px; }
.tab-current {
  width: 23px;
  height: 36px;
  flex: none;
  border-radius: 6px 6px 0 0;
  background: #48464f;
  display: grid;
  place-items: center;
}
.tab-current span {
  width: 16px;
  height: 16px;
  border-radius: 3px;
  background: #3a7bf0;
  color: #fff;
  font-size: 9px;
  line-height: 16px;
  font-weight: bold;
}
.new-tab { width: 23px; height: 23px; flex: none; margin-left: 12px; border-radius: 50%; background: #45464f; }
.window-buttons { margin-left: auto; display: flex; height: 100%; padding-right: 2px; }

.toolbar {
  height: 40px;
  flex: none;
  display: flex;
  align-items: center;
  padding: 0 2px;
  border-radius: 8px 8px 0 0;
  background: #48464f;
}
.address { display: flex; gap: 2px; height: 24px; margin-left: 6px; }
.lock { width: 24px; border-radius: 6px; background: #393a43; }
.url { width: 186px; border-radius: 6px; background: #393a43; color: #a09fa6; font-size: 15px; line-height: 24px; }
.page-title {
  flex: 1;
  min-width: 0;
  margin-left: 96px;
  overflow: hidden;
  white-space: nowrap;
  text-overflow: ellipsis;
  font-size: 15px;
  line-height: 24px;
  color: #f4f4f5;
}
.extensions { display: flex; }
.shield { position: relative; }
.shield b {
  position: absolute;
  right: 7px;
  bottom: 0;
  width: 13px;
  height: 13px;
  border-radius: 3px;
  background: #555;
  color: #fff;
  font-size: 11px;
  line-height: 13px;
  font-weight: 400;
}
.m-badge {
  width: 20px;
  height: 20px;
  border-radius: 50%;
  background: #a3aab5;
  color: #fff;
  font-weight: bold;
  font-size: 12px;
  line-height: 20px;
}

/* cloud console */
.console { position: relative; flex: 1; min-height: 0; display: flex; background: #2d2c33; }
.rail {
  position: relative;
  width: 56px;
  flex: none;
  display: flex;
  flex-direction: column;
  padding-top: 8px;
  border-right: 1px solid #4a4950;
}
.rail-wave { position: absolute; left: 0; top: 0; }
.rail-item { position: relative; height: 40px; flex: none; display: grid; place-items: center; color: #dedee0; }
.rail-nav { display: flex; flex-direction: column; margin-top: 22px; }
.rail-nav .rail-item { color: #7d96b0; }
.rail-bottom { display: flex; flex-direction: column; margin-top: auto; padding-bottom: 8px; }
.org { position: absolute; right: 9px; bottom: 2px; }
.expand { height: 20px; flex: none; border-top: 1px solid #4a4950; }

.workspace { flex: 1; min-width: 0; display: flex; flex-direction: column; }
.crumbs {
  height: 40px;
  flex: none;
  display: flex;
  align-items: center;
  padding-left: 11px;
  border-bottom: 1px solid #4a4950;
}
.crumbs i { width: 20px; text-align: center; font-style: normal; color: #8b8a90; }
.cloud { display: flex; align-items: center; gap: 6px; }
.cloud svg { color: #5282ff; }
.folder { display: flex; align-items: center; gap: 5px; margin-left: 6px; }
.de {
  width: 20px;
  border-radius: 3px;
  background: #904e5c;
  font-size: 8px;
  line-height: 20px;
  font-weight: 600;
  text-align: center;
}
.more { width: 38px; height: 28px; }
.c-icon { margin-left: 12px; }
.home { margin-right: 18px; }
.here { font-weight: 500; }

.split { flex: 1; min-height: 0; display: flex; }
.panel {
  width: 256px;
  flex: none;
  display: flex;
  flex-direction: column;
  padding: 14px 20px 26px;
  border-right: 1px solid #4a4950;
  background: #313036;
}
.panel-head { display: flex; align-items: center; justify-content: space-between; }
.panel h2 { font-size: 15px; line-height: 22px; font-weight: 400; }
.menu { display: flex; flex-direction: column; margin-top: 14px; }
.menu a { height: 40px; display: flex; align-items: center; gap: 10px; }
.menu svg { width: 18px; height: 18px; color: #7d96b0; }
.menu em { font-style: normal; font-size: 10px; font-weight: 500; color: #5f8bff; }
.docs { display: flex; flex-direction: column; gap: 10px; margin-top: auto; color: #6b93ff; white-space: nowrap; }
.docs h2 { color: #e3e2e4; margin-bottom: -2px; }

.main { flex: 1; min-width: 0; padding: 20px; }
.main h1 { font-size: 17px; line-height: 24px; font-weight: 500; }
.main form { margin-top: 20px; }
.row { display: grid; grid-template-columns: 195px 320px; margin-bottom: 15px; }
.row label { padding-top: 4px; }
.req { color: #e0504e; }
.field {
  width: 100%;
  height: 28px;
  padding: 0 8px;
  border: 1px solid #4e4d54;
  border-radius: 5px;
  background: transparent;
  appearance: none;
}
.field option { background: #2d2c33; }
.select { display: grid; align-items: center; }
.select > * { grid-area: 1 / 1; }
.select svg { justify-self: end; margin-right: 9px; pointer-events: none; }
.row p { margin-top: 9px; white-space: nowrap; }

h3 { font-size: 15px; line-height: 24px; font-weight: 500; margin-top: 37px; }
table { border-collapse: collapse; table-layout: fixed; width: 740px; margin-top: 17px; }
th { padding: 0 0 16px; text-align: left; font-weight: 400; white-space: nowrap; }
td { padding: 0 16px 0 0; }
.w-name { width: 216px; }
.w-type { width: 186px; }
.w-key { width: 166px; }
.hint {
  width: 16px;
  height: 16px;
  margin-left: 3px;
  border: 1px solid #55545b;
  border-radius: 50%;
  color: #8b8a90;
  font-size: 10px;
  line-height: 14px;
  vertical-align: 1px;
}
.tick { display: grid; width: 17px; height: 17px; place-items: center; }
.tick > * { grid-area: 1 / 1; }
.tick svg { pointer-events: none; z-index: 1; }
.tick input { appearance: none; width: 17px; height: 17px; margin: 0; border: 1px solid #55545b; border-radius: 4px; }
.tick input:checked { border-color: #5282ff; background: #5282ff; }
.add {
  display: flex;
  align-items: center;
  gap: 9px;
  height: 28px;
  margin-top: 18px;
  padding: 0 9px 0 14px;
  border-radius: 5px;
  background: #424147;
}
.add.index { margin-top: 33px; }
.actions { display: flex; gap: 20px; margin-top: 40px; }
.primary, .secondary { height: 36px; padding: 0 14px; border-radius: 7px; }
.primary { background: #5282ff; color: #eef2ff; }
.secondary { border: 1px solid #4e4d54; }

.floater {
  position: absolute;
  right: 0;
  top: 735px;
  width: 30px;
  height: 30px;
  padding-left: 4px;
  border: 1px solid #2e3846;
  border-right: 0;
  border-radius: 5px 0 0 5px;
  background: #232730;
}
```
